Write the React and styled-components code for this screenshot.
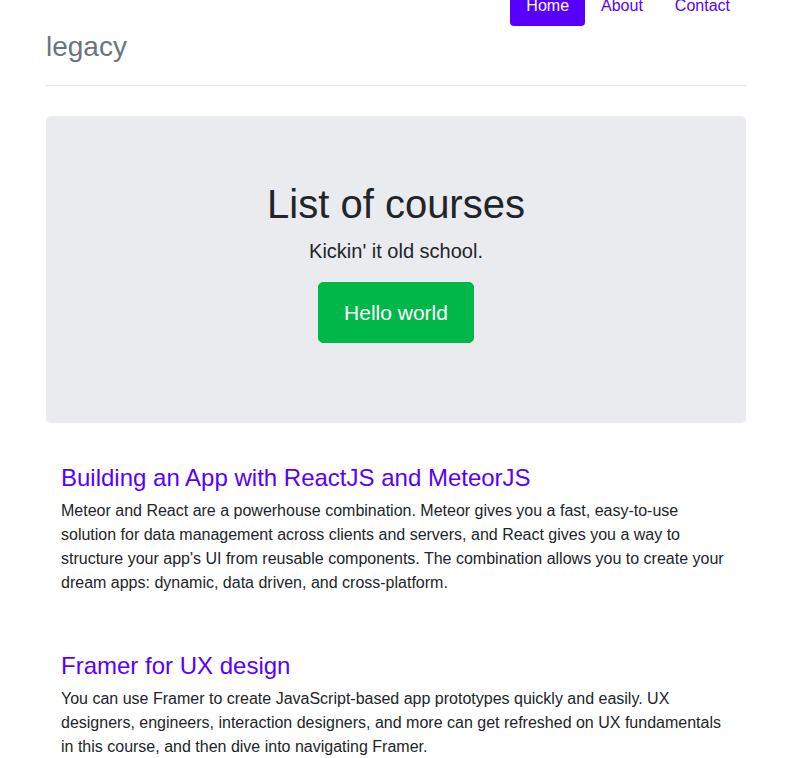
import React from 'react'
import styled, { createGlobalStyle } from 'styled-components'

const GlobalStyle = createGlobalStyle`
  body {
    margin: 0;
    background: #ffffff;
    color: #212529;
    font-family: 'Liberation Sans', Arial, sans-serif;
    font-size: 16px;
    line-height: 1.5;
  }
`

const Page = styled.div`
  width: 700px;
  margin: 0 42px 0 46px;
`

const Header = styled.header`
  display: flex;
  flex-direction: column;
  margin-top: -14px;
  padding-bottom: 15px;
  border-bottom: 1px solid #e5e5e5;
`

const Nav = styled.nav`
  display: flex;
  justify-content: flex-end;
`

const NavLink = styled.a`
  display: block;
  padding: 8px 16px;
  border-radius: 4px;
  font-size: 16px;
  line-height: 24px;
  text-decoration: none;
  color: ${p => (p.$active ? '#ffffff' : '#5800ff')};
  background: ${p => (p.$active ? '#5800ff' : 'transparent')};
`

const Brand = styled.h3`
  margin: -3px 0 0 0;
  font-size: 28px;
  line-height: 47px;
  font-weight: normal;
  color: #6c757d;
`

const Jumbotron = styled.section`
  margin-top: 30px;
  padding: 64px 32px;
  background: #e9ebee;
  border-radius: 5px;
  text-align: center;
`

const Title = styled.h1`
  margin: 0 0 8px;
  font-size: 40px;
  line-height: 48px;
  font-weight: normal;
`

const Lead = styled.p`
  margin: 0 0 16px;
  font-size: 20px;
  line-height: 30px;
`

const ButtonRow = styled.p`
  margin: 0 0 16px;
`

const Button = styled.a`
  display: inline-block;
  padding: 15px 25px;
  border: 1px solid #00b84a;
  border-radius: 5px;
  background: #00b84a;
  color: #ffffff;
  font-size: 21px;
  line-height: 29px;
  text-decoration: none;
`

const Courses = styled.div`
  padding: 0 15px;
`

const Course = styled.article`
  padding-top: 41px;
`

const CourseTitle = styled.h4`
  margin: 0 0 6px;
  font-size: 24px;
  line-height: 28.8px;
  font-weight: normal;
  color: #5800ff;
`

const CourseText = styled.p`
  margin: 0 0 16px;
`

const courses = [
  {
    title: 'Building an App with ReactJS and MeteorJS',
    text: "Meteor and React are a powerhouse combination. Meteor gives you a fast, easy-to-use solution for data management across clients and servers, and React gives you a way to structure your app's UI from reusable components. The combination allows you to create your dream apps: dynamic, data driven, and cross-platform."
  },
  {
    title: 'Framer for UX design',
    text: 'You can use Framer to create JavaScript-based app prototypes quickly and easily. UX designers, engineers, interaction designers, and more can get refreshed on UX fundamentals in this course, and then dive into navigating Framer.'
  }
]

export default function App() {
  return (
    <>
      <GlobalStyle />
      <Page>
        <Header>
          <Nav>
            <NavLink href="#" $active>Home</NavLink>
            <NavLink href="#">About</NavLink>
            <NavLink href="#">Contact</NavLink>
          </Nav>
          <Brand>legacy</Brand>
        </Header>
        <Jumbotron>
          <Title>List of courses</Title>
          <Lead>Kickin' it old school.</Lead>
          <ButtonRow>
            <Button href="#">Hello world</Button>
          </ButtonRow>
        </Jumbotron>
        <Courses>
          {courses.map(c => (
            <Course key={c.title}>
              <CourseTitle>{c.title}</CourseTitle>
              <CourseText>{c.text}</CourseText>
            </Course>
          ))}
        </Courses>
      </Page>
    </>
  )
}
